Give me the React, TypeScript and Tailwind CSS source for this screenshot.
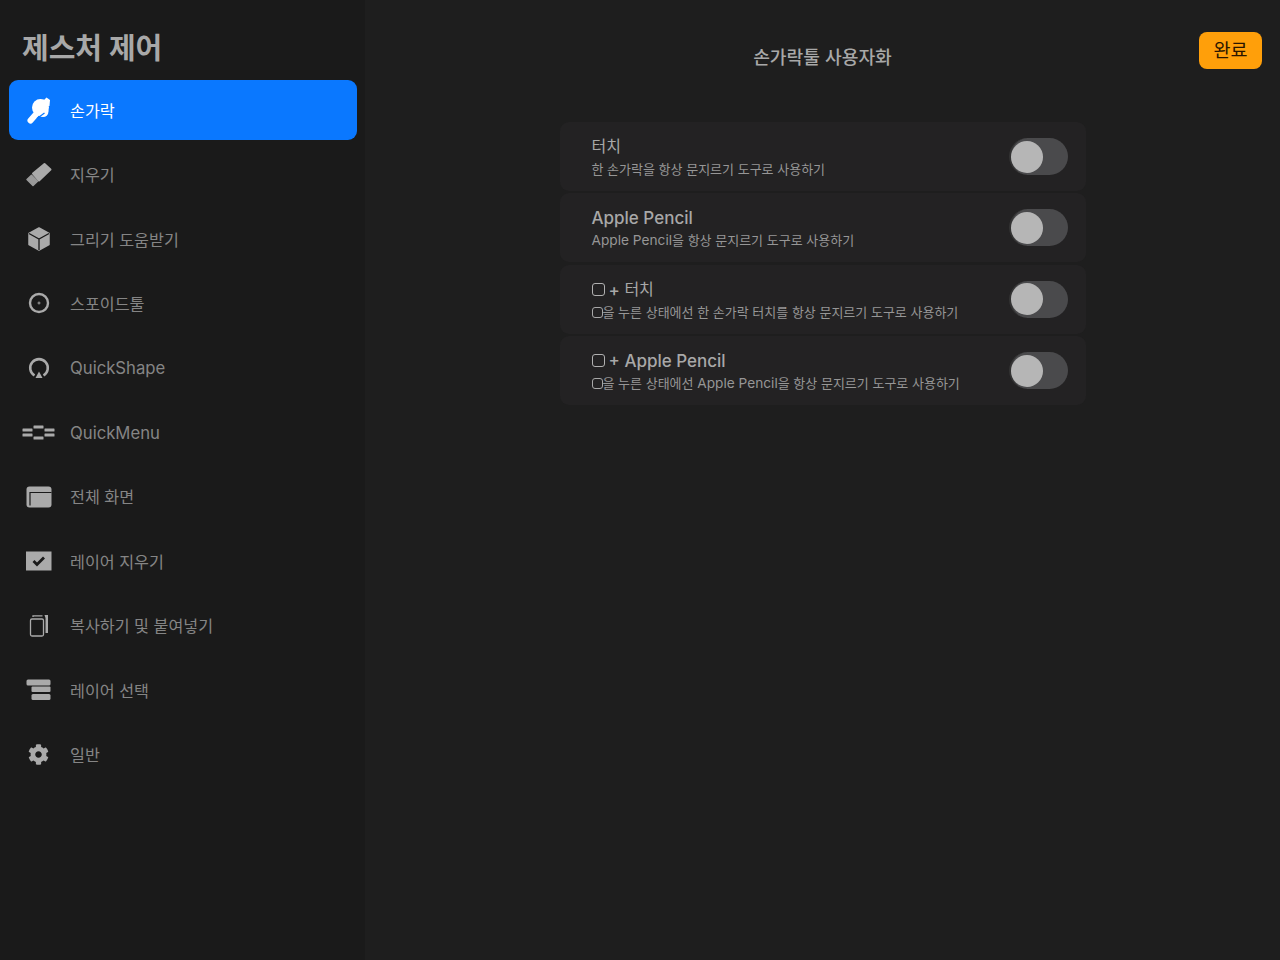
import React from 'react';
import { FaCog } from 'react-icons/fa';

const HandIcon = () => (
  <svg viewBox="0 0 36 36" className="w-9 h-9">
    <g fill="#fff">
      <circle cx="19.500" cy="15.500" r="8.500" />
      <circle cx="22" cy="19.500" r="5.500" />
      <path d="M22 9l3.500-3.500L29 8l-.5 6-6 1z" />
    </g>
    <path d="M16.500 20.500 9.500 28.500" stroke="#fff" strokeWidth="6" strokeLinecap="round" />
    <path d="M16 26.500 23.500 21" stroke="#0a78ff" strokeWidth="1.200" />
  </svg>
);

const EraserIcon = () => (
  <svg viewBox="0 0 36 36" className="w-9 h-9">
    <path d="M12 16.500 23.500 7l6 5.500-11.500 11z" fill="#aaa" stroke="#aaa" strokeWidth="2" strokeLinejoin="round" />
    <path d="M6 22.500l4.500-4.200 6 6L12 28.500z" fill="#9a9a9a" stroke="#9a9a9a" strokeWidth="1.500" strokeLinejoin="round" />
  </svg>
);

const CubeIcon = () => (
  <svg viewBox="0 0 36 36" className="w-9 h-9">
    <path d="M18 7 28 12.500v11L18 29 8 23.500v-11z" fill="#aaa" stroke="#aaa" strokeWidth="1.500" strokeLinejoin="round" />
    <path d="M8 12.500 18 18l10-5.500M18 18v11" fill="none" stroke="#1a1a1a" strokeWidth="1.300" />
  </svg>
);

const DropperIcon = () => (
  <svg viewBox="0 0 36 36" className="w-9 h-9">
    <circle cx="18" cy="18" r="9" fill="none" stroke="#aaa" strokeWidth="2.400" />
    <path d="M16.500 18h3M18 16.500v3" stroke="#aaa" strokeWidth="0.900" />
  </svg>
);

const QuickShapeIcon = () => (
  <svg viewBox="0 0 36 36" className="w-9 h-9">
    <path d="M13.500 25.500a8.800 8.800 0 1 1 9 0" fill="none" stroke="#aaa" strokeWidth="2.600" />
    <path d="M18 21.500l3.500 6.500h-7z" fill="#aaa" />
  </svg>
);

const QuickMenuIcon = () => (
  <svg viewBox="0 0 36 36" className="w-9 h-9">
    <g fill="#aaa">
      <rect x="1.500" y="14.500" width="10" height="3" rx="0.500" />
      <rect x="1.500" y="19.500" width="10" height="3" rx="0.500" />
      <rect x="12.500" y="11.500" width="10" height="3" rx="0.500" />
      <rect x="12.500" y="22.500" width="10" height="3" rx="0.500" />
      <rect x="23.500" y="14.500" width="10" height="3" rx="0.500" />
      <rect x="23.500" y="19.500" width="10" height="3" rx="0.500" />
    </g>
  </svg>
);

const WindowIcon = () => (
  <svg viewBox="0 0 36 36" className="w-9 h-9">
    <rect x="5.500" y="7.500" width="25" height="21" rx="3" fill="#aaa" />
    <path d="M30.500 13.500H9v13" fill="none" stroke="#1a1a1a" strokeWidth="1.200" />
  </svg>
);

const CheckIcon = () => (
  <svg viewBox="0 0 36 36" className="w-9 h-9">
    <rect x="5" y="8.500" width="25.500" height="19" fill="#aaa" />
    <path d="M12.500 18l3.500 3.500 7-7" fill="none" stroke="#1a1a1a" strokeWidth="2.800" />
  </svg>
);

const CopyIcon = () => (
  <svg viewBox="0 0 36 36" className="w-9 h-9">
    <rect x="9.500" y="12" width="13" height="17" rx="1.500" fill="none" stroke="#aaa" strokeWidth="1.300" />
    <path d="M12 10V8.800h9.500" fill="none" stroke="#aaa" strokeWidth="1.300" />
    <path d="M23.500 8H27v18h-2.500V11z" fill="#aaa" />
  </svg>
);

const LayersIcon = () => (
  <svg viewBox="0 0 36 36" className="w-9 h-9">
    <g fill="#aaa">
      <rect x="5.500" y="7.500" width="24" height="6" rx="1.500" />
      <rect x="10.500" y="14.500" width="19" height="5.500" rx="1" />
      <rect x="10.500" y="22" width="19" height="6" rx="1.500" />
    </g>
  </svg>
);

const GearIcon = () => (
  <span className="w-9 h-9 flex items-center justify-center pr-[1px]">
    <FaCog size={21} color="#aaa" />
  </span>
);

const menu = [
  { label: '손가락', icon: <HandIcon />, active: true },
  { label: '지우기', icon: <EraserIcon /> },
  { label: '그리기 도움받기', icon: <CubeIcon /> },
  { label: '스포이드툴', icon: <DropperIcon /> },
  { label: 'QuickShape', icon: <QuickShapeIcon />, latin: true },
  { label: 'QuickMenu', icon: <QuickMenuIcon />, latin: true },
  { label: '전체 화면', icon: <WindowIcon /> },
  { label: '레이어 지우기', icon: <CheckIcon /> },
  { label: '복사하기 및 붙여넣기', icon: <CopyIcon /> },
  { label: '레이어 선택', icon: <LayersIcon /> },
  { label: '일반', icon: <GearIcon /> },
];

// the modify key glyph, a rounded square
const KeyBox = ({ small }: { small?: boolean }) => (
  <span
    className={
      small
        ? 'inline-block w-[11px] h-[11px] rounded-[3px] border border-[#a8a8a8] align-[-1px]'
        : 'inline-block w-[13px] h-[13px] rounded-[3px] border border-[#b0b0b0] align-[0px] mr-[4px]'
    }
  />
);

const Ko = ({ children }: { children: React.ReactNode }) => (
  <span className="text-[16px] leading-none font-normal align-[1px]">{children}</span>
);

const En = ({ children }: { children: React.ReactNode }) => (
  <span className="text-[13.700px]">{children}</span>
);

const Toggle = () => (
  <div className="w-[59px] h-[37px] rounded-full bg-[#4a4a4c] border-l-2 border-[#333] flex items-center shrink-0">
    <div className="w-[32px] h-[32px] rounded-full bg-[#b6b6b6]" />
  </div>
);

const rows = [
  {
    title: <Ko>터치</Ko>,
    sub: <>한 손가락을 항상 문지르기 도구로 사용하기</>,
  },
  {
    title: <>Apple Pencil</>,
    sub: <><En>Apple Pencil</En>을 항상 문지르기 도구로 사용하기</>,
  },
  {
    title: <><KeyBox />+ <Ko>터치</Ko></>,
    sub: <><KeyBox small />을 누른 상태에선 한 손가락 터치를 항상 문지르기 도구로 사용하기</>,
  },
  {
    title: <><KeyBox />+ Apple Pencil</>,
    sub: <><KeyBox small />을 누른 상태에선 <En>Apple Pencil</En>을 항상 문지르기 도구로 사용하기</>,
  },
];

export default function App() {
  return (
    <div className="flex w-[1280px] h-[960px] overflow-hidden bg-[#1e1e1e] font-['Inter','Noto_Sans_CJK_KR',sans-serif]">
      <aside className="w-[365px] shrink-0 bg-[#1a1a1a] pl-[9px] pr-2">
        <div className="h-[78px] flex items-center pl-[13px] pt-[19px]">
          <h1 className="text-[29px] leading-none font-bold text-[#a8a8a8]">제스처 제어</h1>
        </div>
        <nav>
          {menu.map((item) => (
            <div key={item.label} className="h-[64.4px] flex items-center">
              <div
                className={`w-full h-[60px] flex items-center pl-[11.5px] rounded-[9px] ${
                  item.active ? 'bg-[#0a78ff] text-white' : 'text-[#858585]'
                }`}
              >
                {item.icon}
                <span className={`ml-[13.5px] pt-[2px] ${item.latin ? 'text-[16.700px]' : 'text-[16.200px]'}`}>
                  {item.label}
                </span>
              </div>
            </div>
          ))}
        </nav>
      </aside>

      <main className="flex-1">
        <header className="grid grid-cols-[1fr_auto_1fr] h-[122px]">
          <div />
          <h2 className="pt-[44px] text-[18.200px] leading-[26px] font-medium text-[#a8a8a8]">손가락툴 사용자화</h2>
          <div className="pt-[32px] pr-[18px] flex justify-end items-start">
            <button className="w-[63px] h-[37px] rounded-[8px] bg-[#ff9f0a] text-[#2a1500] text-[18.500px] leading-none">
              완료
            </button>
          </div>
        </header>

        <div className="w-[526px] mx-auto flex flex-col gap-[2.4px]">
          {rows.map((row, i) => (
            <div key={i} className="h-[69px] rounded-[9px] bg-[#232223] flex items-center justify-between pl-[32px] pr-[18px]">
              <div className="flex flex-col gap-[1px] pt-[2px]">
                <div className="text-[17px] leading-[22px] font-medium text-[#a8a8a8]">{row.title}</div>
                <div className="text-[13px] leading-[20px] text-[#969696]">{row.sub}</div>
              </div>
              <Toggle />
            </div>
          ))}
        </div>
      </main>
    </div>
  );
}
